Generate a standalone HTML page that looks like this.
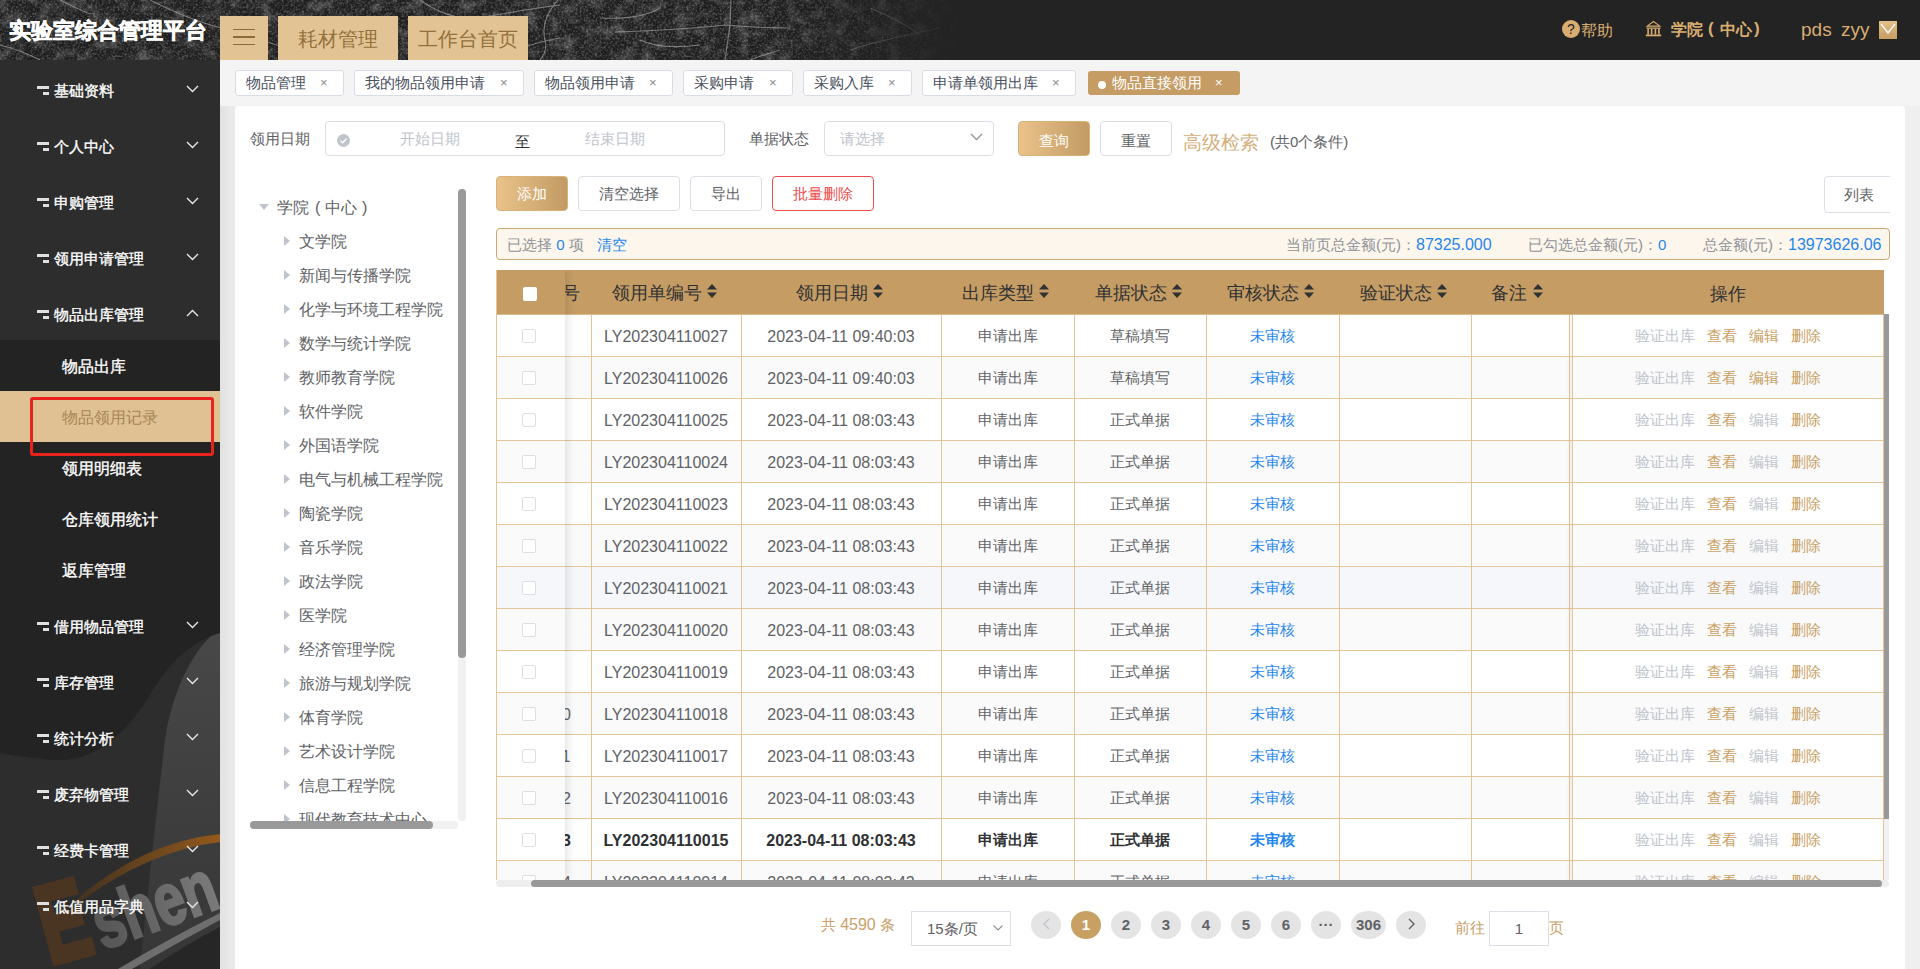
<!DOCTYPE html><html><head><meta charset="utf-8"><style>
*{margin:0;padding:0;box-sizing:border-box}
html,body{width:1920px;height:969px;overflow:hidden;background:#efefef;font-family:"Liberation Sans",sans-serif;color:#606266}
div,span{position:absolute;white-space:nowrap}
.htab{top:16px;height:44px;background:#e2c494;color:#94703c;font-size:20px;text-align:center;line-height:46px}
.mi{left:0;width:220px;height:56px;color:#fff;font-size:15px}
.mi .ic{left:37px;top:26px;width:12px;height:2.5px;background:#e0e0e0}
.mi .ic2{left:43px;top:32px;width:6px;height:2.5px;background:#e0e0e0}
.mi .t{left:54px;top:22px;line-height:18px;font-weight:500;-webkit-text-stroke:0.35px #fff}
.mi svg{position:absolute;left:186px;top:25px}
.si{left:0;width:220px;height:51px;color:#fff;font-size:16px}
.si .t{left:62px;top:18px;line-height:18px;font-weight:500;-webkit-text-stroke:0.35px #fff}
.tag{top:70px;height:26px;border:1px solid #d8dce5;border-radius:3px;background:#fff;font-size:15px;color:#495060}
.tag .t{left:10px;top:3px;line-height:18px}
.tag .x{top:4px;line-height:16px;font-size:13px;color:#888}
.lbl{font-size:15px;color:#606266;line-height:18px}
.inp{border:1px solid #dcdfe6;border-radius:4px;background:#fff}
.ph{font-size:15px;color:#c0c4cc;line-height:18px}
.btn{height:35px;border:1px solid #dcdfe6;border-radius:4px;background:#fff;font-size:15px;color:#606266;text-align:center;line-height:33px}
.gbtn{background:linear-gradient(90deg,#eac38b,#c19b63);border-color:#d8b27a;color:#fff}
.th{top:270px;height:44px;background:#c49c64}
.tht{font-size:17.5px;color:#303133;line-height:20px;top:283px}
.sort{top:284px;width:10px;height:14px}
.row{left:496px;width:1388px;height:42px;border-bottom:1px solid #e4c497}
.cell{font-size:15px;color:#606266;line-height:18px}
.en{font-size:16px}
.vl{width:1px;background:#e4c497}
.cb{width:14px;height:14px;border:1px solid #dcdfe6;border-radius:2px;background:#fff}
.pg{top:911px;width:30px;height:28px;border-radius:50%;background:#e4e4e4;font-size:15px;font-weight:bold;color:#606266;text-align:center;line-height:28px}
</style></head><body>
<div style="left:0;top:0;width:1920px;height:60px;background:#232323;overflow:hidden">
<svg style="position:absolute;left:0;top:0" width="980" height="60"><defs><filter id="nz" x="0" y="0" width="100%" height="100%"><feTurbulence type="fractalNoise" baseFrequency="0.45" numOctaves="4" seed="7"/><feColorMatrix values="0 0 0 0 1  0 0 0 0 1  0 0 0 0 1  0 2.2 0 0 -0.95"/></filter><filter id="nz2" x="0" y="0" width="100%" height="100%"><feTurbulence type="fractalNoise" baseFrequency="0.08" numOctaves="3" seed="11"/><feColorMatrix values="0 0 0 0 1  0 0 0 0 1  0 0 0 0 1  2.5 0 0 0 -1.1"/></filter><linearGradient id="fade" x1="0" x2="1"><stop offset="0" stop-color="#fff" stop-opacity="1"/><stop offset="0.78" stop-color="#fff" stop-opacity="1"/><stop offset="0.98" stop-color="#fff" stop-opacity="0"/></linearGradient><mask id="fm"><rect width="980" height="60" fill="url(#fade)"/></mask></defs><g mask="url(#fm)"><rect width="980" height="60" fill="#1e1e1e"/><rect width="980" height="60" filter="url(#nz2)" opacity="0.2"/><rect width="980" height="60" filter="url(#nz)" opacity="0.28"/><g fill="none" stroke="#b0b0b0" stroke-width="1.1" opacity="0.6"><path d="M232 30 Q290 50 330 62"/><path d="M558 0 Q540 20 545 40 Q548 50 540 60"/><path d="M731 0 L730 25 L725 60"/><path d="M615 32 Q680 30 725 25 Q760 28 790 28"/><path d="M640 40 Q660 50 700 45"/><path d="M780 50 Q760 56 750 60"/><path d="M420 0 Q440 15 470 20 Q520 10 560 5"/><path d="M150 0 Q200 25 232 30"/><path d="M600 18 Q640 20 660 8"/><path d="M870 8 Q900 20 920 35"/><path d="M850 50 Q880 40 940 28"/><path d="M450 20 Q430 40 415 60"/><path d="M500 60 Q520 45 560 38"/><path d="M60 0 Q80 10 90 14"/><path d="M0 45 Q20 50 40 60"/><path d="M950 10 L970 40"/></g></g></svg>
<div style="left:9px;top:18px;font-size:22px;font-weight:bold;-webkit-text-stroke:0.6px #fff;color:#fff;line-height:26px">实验室综合管理平台</div>
<div class="htab" style="left:220px;width:48px"></div>
<div style="left:233px;top:29px;width:22px;height:1.3px;background:#8d6a36"></div>
<div style="left:233px;top:36px;width:22px;height:2px;background:#8d6a36"></div>
<div style="left:233px;top:44px;width:22px;height:1.3px;background:#8d6a36"></div>
<div class="htab" style="left:278px;width:120px">耗材管理</div>
<div class="htab" style="left:408px;width:120px">工作台首页</div>
<div style="left:1562px;top:20px;width:18px;height:18px;border-radius:50%;background:#d9ad72;color:#232323;font-size:14px;font-weight:normal;text-align:center;line-height:18px">?</div>
<div style="left:1581px;top:21px;font-size:16px;color:#d9ad72;line-height:20px">帮助</div>
<svg style="position:absolute;left:1645px;top:20px" width="17" height="17" viewBox="0 0 17 17"><path d="M0.5 6.8 L8.5 0.8 L16.5 6.8 Z" fill="#d9ad72"/><path d="M3.8 5.6 L8.5 2.3 L13.2 5.6Z" fill="#232323"/><rect x="1.5" y="7.5" width="14" height="1.2" fill="#d9ad72"/><rect x="2.3" y="8.5" width="1.6" height="6" fill="#d9ad72"/><rect x="5.8" y="8.5" width="1.6" height="6" fill="#d9ad72"/><rect x="9.6" y="8.5" width="1.6" height="6" fill="#d9ad72"/><rect x="13.1" y="8.5" width="1.6" height="6" fill="#d9ad72"/><rect x="0.8" y="14.5" width="15.4" height="1.8" fill="#d9ad72"/></svg>
<div style="left:1671px;top:20px;font-size:16px;font-weight:bold;color:#d9ad72;line-height:20px">学院</div>
<div style="left:1708px;top:19px;font-size:17px;font-weight:bold;color:#d9ad72;line-height:20px">(</div>
<div style="left:1720px;top:20px;font-size:16px;font-weight:bold;color:#d9ad72;line-height:20px">中心</div>
<div style="left:1754px;top:19px;font-size:17px;font-weight:bold;color:#d9ad72;line-height:20px">)</div>
<div style="left:1801px;top:19px;font-size:19px;color:#d9ad72;line-height:22px">pds</div>
<div style="left:1841px;top:19px;font-size:19px;color:#d9ad72;line-height:22px">zyy</div>
<div style="left:1879px;top:21px;width:18px;height:18px;background:linear-gradient(180deg,#e4c08a,#c59c62)"></div>
<svg style="position:absolute;left:1879px;top:21px" width="18" height="18"><path d="M2 3 L9 12 L16 3" fill="none" stroke="#fff" stroke-width="1.3"/></svg>
</div>
<div style="left:0;top:60px;width:220px;height:909px;background:#2d2d2d;overflow:hidden">
<svg style="position:absolute;left:0;top:0" width="220" height="909"><defs><linearGradient id="lg1" x1="0" y1="0" x2="0" y2="1"><stop offset="0" stop-color="#484848"/><stop offset="1" stop-color="#363636"/></linearGradient><linearGradient id="og" x1="0" y1="0" x2="1" y2="0"><stop offset="0" stop-color="#3e3020"/><stop offset="1" stop-color="#93591c"/></linearGradient><linearGradient id="sg" x1="0" y1="0" x2="1" y2="0"><stop offset="0" stop-color="#555"/><stop offset="1" stop-color="#7a7a7a"/></linearGradient></defs><g transform="translate(0,-60)"><path d="M220 629 C195 645 172 690 165 740 C158 800 150 870 140 969 L220 969 Z" fill="url(#lg1)"/><path d="M0 596 L220 596 L220 633 C195 640 170 660 150 695 C125 735 95 762 55 760 C30 758 10 755 0 753 Z" fill="#232323"/><path d="M70 905 Q140 842 220 834 L220 842 Q150 850 78 903 Z" fill="url(#og)"/><text transform="translate(50,964) rotate(-15) scale(0.72,1.1)" font-size="100" font-weight="bold" fill="#4a3522" stroke="#4a3522" stroke-width="6" font-family="Liberation Sans">E</text><text transform="translate(103,950) rotate(-20) scale(0.8,1.08)" font-size="68" font-weight="bold" fill="url(#sg)" stroke="url(#sg)" stroke-width="2.5" font-family="Liberation Sans">shen</text><path d="M150 969 Q185 945 220 927 L220 969 Z" fill="#262626"/><path d="M118 969 Q170 938 220 913 L220 920 Q175 944 132 969 Z" fill="#6e6e6e"/></g></svg>
</div>
<div style="left:0;top:340px;width:220px;height:256px;background:#232323"></div>
<div class="mi" style="top:60px"><div class="ic"></div><div class="ic2"></div><div class="t">基础资料</div><svg width="13" height="8" viewBox="0 0 13 8"><path d="M1 1 L6.5 6.5 L12 1" fill="none" stroke="#e8e8e8" stroke-width="1.4"/></svg></div>
<div class="mi" style="top:116px"><div class="ic"></div><div class="ic2"></div><div class="t">个人中心</div><svg width="13" height="8" viewBox="0 0 13 8"><path d="M1 1 L6.5 6.5 L12 1" fill="none" stroke="#e8e8e8" stroke-width="1.4"/></svg></div>
<div class="mi" style="top:172px"><div class="ic"></div><div class="ic2"></div><div class="t">申购管理</div><svg width="13" height="8" viewBox="0 0 13 8"><path d="M1 1 L6.5 6.5 L12 1" fill="none" stroke="#e8e8e8" stroke-width="1.4"/></svg></div>
<div class="mi" style="top:228px"><div class="ic"></div><div class="ic2"></div><div class="t">领用申请管理</div><svg width="13" height="8" viewBox="0 0 13 8"><path d="M1 1 L6.5 6.5 L12 1" fill="none" stroke="#e8e8e8" stroke-width="1.4"/></svg></div>
<div class="mi" style="top:284px"><div class="ic"></div><div class="ic2"></div><div class="t">物品出库管理</div><svg width="13" height="8" viewBox="0 0 13 8"><path d="M1 7 L6.5 1.5 L12 7" fill="none" stroke="#e8e8e8" stroke-width="1.4"/></svg></div>
<div class="mi" style="top:596px"><div class="ic"></div><div class="ic2"></div><div class="t">借用物品管理</div><svg width="13" height="8" viewBox="0 0 13 8"><path d="M1 1 L6.5 6.5 L12 1" fill="none" stroke="#e8e8e8" stroke-width="1.4"/></svg></div>
<div class="mi" style="top:652px"><div class="ic"></div><div class="ic2"></div><div class="t">库存管理</div><svg width="13" height="8" viewBox="0 0 13 8"><path d="M1 1 L6.5 6.5 L12 1" fill="none" stroke="#e8e8e8" stroke-width="1.4"/></svg></div>
<div class="mi" style="top:708px"><div class="ic"></div><div class="ic2"></div><div class="t">统计分析</div><svg width="13" height="8" viewBox="0 0 13 8"><path d="M1 1 L6.5 6.5 L12 1" fill="none" stroke="#e8e8e8" stroke-width="1.4"/></svg></div>
<div class="mi" style="top:764px"><div class="ic"></div><div class="ic2"></div><div class="t">废弃物管理</div><svg width="13" height="8" viewBox="0 0 13 8"><path d="M1 1 L6.5 6.5 L12 1" fill="none" stroke="#e8e8e8" stroke-width="1.4"/></svg></div>
<div class="mi" style="top:820px"><div class="ic"></div><div class="ic2"></div><div class="t">经费卡管理</div><svg width="13" height="8" viewBox="0 0 13 8"><path d="M1 1 L6.5 6.5 L12 1" fill="none" stroke="#e8e8e8" stroke-width="1.4"/></svg></div>
<div class="mi" style="top:876px"><div class="ic"></div><div class="ic2"></div><div class="t">低值用品字典</div><svg width="13" height="8" viewBox="0 0 13 8"><path d="M1 1 L6.5 6.5 L12 1" fill="none" stroke="#e8e8e8" stroke-width="1.4"/></svg></div>
<div style="left:0;top:391px;width:220px;height:51px;background:#e0c193"></div>
<div class="si" style="top:340px"><div class="t" style="">物品出库</div></div>
<div class="si" style="top:391px"><div class="t" style="color:#a88658;font-weight:normal;-webkit-text-stroke:0">物品领用记录</div></div>
<div class="si" style="top:442px"><div class="t" style="">领用明细表</div></div>
<div class="si" style="top:493px"><div class="t" style="">仓库领用统计</div></div>
<div class="si" style="top:544px"><div class="t" style="">返库管理</div></div>
<div style="left:30px;top:397px;width:184px;height:59px;border:3px solid #e8231d;border-radius:3px"></div>
<div style="left:220px;top:60px;width:1700px;height:46px;background:#f4f4f5"></div>
<div style="left:220px;top:106px;width:15px;height:863px;background:linear-gradient(90deg,#e2e2e2,#ececec)"></div>
<div class="tag" style="left:235px;width:109px"><span class="t">物品管理</span><span class="x" style="left:84px">×</span></div>
<div class="tag" style="left:354px;width:170px"><span class="t">我的物品领用申请</span><span class="x" style="left:145px">×</span></div>
<div class="tag" style="left:534px;width:139px"><span class="t">物品领用申请</span><span class="x" style="left:114px">×</span></div>
<div class="tag" style="left:683px;width:110px"><span class="t">采购申请</span><span class="x" style="left:85px">×</span></div>
<div class="tag" style="left:803px;width:109px"><span class="t">采购入库</span><span class="x" style="left:84px">×</span></div>
<div class="tag" style="left:922px;width:154px"><span class="t">申请单领用出库</span><span class="x" style="left:129px">×</span></div>
<div style="left:1088px;top:71px;width:152px;height:24px;background:#c49c64;border-radius:3px"></div>
<div style="left:1098px;top:81px;width:8px;height:8px;border-radius:50%;background:#fff"></div>
<div style="left:1112px;top:74px;font-size:15px;color:#fff;line-height:18px">物品直接领用</div>
<div style="left:1215px;top:75px;font-size:13px;color:#fff;line-height:16px">×</div>
<div style="left:235px;top:106px;width:1670px;height:863px;background:#fff;border-radius:4px 4px 0 0"></div>
<div class="lbl" style="left:250px;top:130px">领用日期</div>
<div class="inp" style="left:325px;top:121px;width:400px;height:35px"></div>
<div style="left:337px;top:134px;width:13px;height:13px;border-radius:50%;background:#c0c4cc"></div>
<svg style="position:absolute;left:337px;top:134px" width="13" height="13"><path d="M3.5 6.8 L5.6 8.8 L9.6 4.6" fill="none" stroke="#fff" stroke-width="1.3"/></svg>
<div class="ph" style="left:400px;top:130px">开始日期</div>
<div style="left:515px;top:133px;font-size:15px;color:#303133;line-height:18px">至</div>
<div class="ph" style="left:585px;top:130px">结束日期</div>
<div class="lbl" style="left:749px;top:130px">单据状态</div>
<div class="inp" style="left:824px;top:121px;width:170px;height:35px"></div>
<div class="ph" style="left:840px;top:130px">请选择</div>
<svg style="position:absolute;left:970px;top:133px" width="13" height="8"><path d="M1 1 L6.5 6.5 L12 1" fill="none" stroke="#909399" stroke-width="1.3"/></svg>
<div class="btn gbtn" style="left:1018px;top:121px;width:72px;line-height:37px">查询</div>
<div class="btn" style="left:1100px;top:121px;width:72px;line-height:37px">重置</div>
<div style="left:1183px;top:132px;font-size:19px;color:#d4b080;line-height:22px">高级检索</div>
<div style="left:1270px;top:133px;font-size:15px;color:#606266;line-height:18px">(共0个条件)</div>
<div style="left:240px;top:180px;width:220px;height:641px;overflow:hidden">
<svg style="position:absolute;left:19px;top:24px" width="10" height="6"><path d="M0 0 L10 0 L5 6Z" fill="#c0c4cc"/></svg>
<div style="left:37px;top:19px;font-size:16px;color:#606266;line-height:18px">学院</div>
<div style="left:75px;top:19px;font-size:16px;color:#606266;line-height:18px">(</div>
<div style="left:85px;top:19px;font-size:16px;color:#606266;line-height:18px">中心</div>
<div style="left:122px;top:19px;font-size:16px;color:#606266;line-height:18px">)</div>
<svg style="position:absolute;left:44px;top:56px" width="6" height="10"><path d="M0 0 L6 5 L0 10Z" fill="#c0c4cc"/></svg>
<div style="left:59px;top:53px;font-size:16px;color:#606266;line-height:18px">文学院</div>
<svg style="position:absolute;left:44px;top:90px" width="6" height="10"><path d="M0 0 L6 5 L0 10Z" fill="#c0c4cc"/></svg>
<div style="left:59px;top:87px;font-size:16px;color:#606266;line-height:18px">新闻与传播学院</div>
<svg style="position:absolute;left:44px;top:124px" width="6" height="10"><path d="M0 0 L6 5 L0 10Z" fill="#c0c4cc"/></svg>
<div style="left:59px;top:121px;font-size:16px;color:#606266;line-height:18px">化学与环境工程学院</div>
<svg style="position:absolute;left:44px;top:158px" width="6" height="10"><path d="M0 0 L6 5 L0 10Z" fill="#c0c4cc"/></svg>
<div style="left:59px;top:155px;font-size:16px;color:#606266;line-height:18px">数学与统计学院</div>
<svg style="position:absolute;left:44px;top:192px" width="6" height="10"><path d="M0 0 L6 5 L0 10Z" fill="#c0c4cc"/></svg>
<div style="left:59px;top:189px;font-size:16px;color:#606266;line-height:18px">教师教育学院</div>
<svg style="position:absolute;left:44px;top:226px" width="6" height="10"><path d="M0 0 L6 5 L0 10Z" fill="#c0c4cc"/></svg>
<div style="left:59px;top:223px;font-size:16px;color:#606266;line-height:18px">软件学院</div>
<svg style="position:absolute;left:44px;top:260px" width="6" height="10"><path d="M0 0 L6 5 L0 10Z" fill="#c0c4cc"/></svg>
<div style="left:59px;top:257px;font-size:16px;color:#606266;line-height:18px">外国语学院</div>
<svg style="position:absolute;left:44px;top:294px" width="6" height="10"><path d="M0 0 L6 5 L0 10Z" fill="#c0c4cc"/></svg>
<div style="left:59px;top:291px;font-size:16px;color:#606266;line-height:18px">电气与机械工程学院</div>
<svg style="position:absolute;left:44px;top:328px" width="6" height="10"><path d="M0 0 L6 5 L0 10Z" fill="#c0c4cc"/></svg>
<div style="left:59px;top:325px;font-size:16px;color:#606266;line-height:18px">陶瓷学院</div>
<svg style="position:absolute;left:44px;top:362px" width="6" height="10"><path d="M0 0 L6 5 L0 10Z" fill="#c0c4cc"/></svg>
<div style="left:59px;top:359px;font-size:16px;color:#606266;line-height:18px">音乐学院</div>
<svg style="position:absolute;left:44px;top:396px" width="6" height="10"><path d="M0 0 L6 5 L0 10Z" fill="#c0c4cc"/></svg>
<div style="left:59px;top:393px;font-size:16px;color:#606266;line-height:18px">政法学院</div>
<svg style="position:absolute;left:44px;top:430px" width="6" height="10"><path d="M0 0 L6 5 L0 10Z" fill="#c0c4cc"/></svg>
<div style="left:59px;top:427px;font-size:16px;color:#606266;line-height:18px">医学院</div>
<svg style="position:absolute;left:44px;top:464px" width="6" height="10"><path d="M0 0 L6 5 L0 10Z" fill="#c0c4cc"/></svg>
<div style="left:59px;top:461px;font-size:16px;color:#606266;line-height:18px">经济管理学院</div>
<svg style="position:absolute;left:44px;top:498px" width="6" height="10"><path d="M0 0 L6 5 L0 10Z" fill="#c0c4cc"/></svg>
<div style="left:59px;top:495px;font-size:16px;color:#606266;line-height:18px">旅游与规划学院</div>
<svg style="position:absolute;left:44px;top:532px" width="6" height="10"><path d="M0 0 L6 5 L0 10Z" fill="#c0c4cc"/></svg>
<div style="left:59px;top:529px;font-size:16px;color:#606266;line-height:18px">体育学院</div>
<svg style="position:absolute;left:44px;top:566px" width="6" height="10"><path d="M0 0 L6 5 L0 10Z" fill="#c0c4cc"/></svg>
<div style="left:59px;top:563px;font-size:16px;color:#606266;line-height:18px">艺术设计学院</div>
<svg style="position:absolute;left:44px;top:600px" width="6" height="10"><path d="M0 0 L6 5 L0 10Z" fill="#c0c4cc"/></svg>
<div style="left:59px;top:597px;font-size:16px;color:#606266;line-height:18px">信息工程学院</div>
<svg style="position:absolute;left:44px;top:634px" width="6" height="10"><path d="M0 0 L6 5 L0 10Z" fill="#c0c4cc"/></svg>
<div style="left:59px;top:631px;font-size:16px;color:#606266;line-height:18px">现代教育技术中心</div>
</div>
<div style="left:458px;top:189px;width:8px;height:632px;border-radius:4px;background:#f1f1f1"></div>
<div style="left:458px;top:189px;width:8px;height:469px;border-radius:4px;background:#999"></div>
<div style="left:250px;top:821px;width:208px;height:8px;border-radius:4px;background:#f1f1f1"></div>
<div style="left:250px;top:821px;width:183px;height:8px;border-radius:4px;background:#999"></div>
<div class="btn gbtn" style="left:496px;top:176px;width:72px">添加</div>
<div class="btn" style="left:578px;top:176px;width:102px">清空选择</div>
<div class="btn" style="left:690px;top:176px;width:72px">导出</div>
<div class="btn" style="left:772px;top:176px;width:102px;border-color:#f04a4a;color:#f04a4a">批量删除</div>
<div class="btn" style="left:1824px;top:176px;width:70px;height:37px;line-height:36px">列表</div>
<div style="left:1890px;top:170px;width:15px;height:50px;background:#fff"></div>
<div style="left:496px;top:228px;width:1394px;height:32px;border:1px solid #c9a878;border-radius:4px;background:#fdf6ec"></div>
<div style="left:507px;top:236px;font-size:15px;line-height:18px;color:#909399">已选择 <span style="position:static;color:#1f86f0">0</span> 项</div>
<div style="left:597px;top:236px;font-size:15px;line-height:18px;color:#1f86f0">清空</div>
<div style="left:1286px;top:236px;font-size:15px;line-height:18px;color:#909399">当前页总金额(元)：<span style="position:static;color:#1f86f0;font-size:16px">87325.000</span></div>
<div style="left:1528px;top:236px;font-size:15px;line-height:18px;color:#909399">已勾选总金额(元)：<span style="position:static;color:#1f86f0">0</span></div>
<div style="left:1703px;top:236px;font-size:15px;line-height:18px;color:#909399">总金额(元)：<span style="position:static;color:#1f86f0;font-size:16px">13973626.06</span></div>
<div style="left:496px;top:270px;width:1393px;height:610px;overflow:hidden">
<div style="left:0;top:0;width:1388px;height:45px;background:#c49c64;border-bottom:1px solid #dcbb8a"></div>
<div class="tht" style="left:116px;top:13px">领用单编号</div>
<svg style="position:absolute;left:211px;top:14px" width="10" height="14" viewBox="0 0 10 14"><path d="M5 0 L10 5.5 L0 5.5Z" fill="#303133"/><path d="M0 8.5 L10 8.5 L5 14Z" fill="#303133"/></svg>
<div class="tht" style="left:300px;top:13px">领用日期</div>
<svg style="position:absolute;left:377px;top:14px" width="10" height="14" viewBox="0 0 10 14"><path d="M5 0 L10 5.5 L0 5.5Z" fill="#303133"/><path d="M0 8.5 L10 8.5 L5 14Z" fill="#303133"/></svg>
<div class="tht" style="left:466px;top:13px">出库类型</div>
<svg style="position:absolute;left:543px;top:14px" width="10" height="14" viewBox="0 0 10 14"><path d="M5 0 L10 5.5 L0 5.5Z" fill="#303133"/><path d="M0 8.5 L10 8.5 L5 14Z" fill="#303133"/></svg>
<div class="tht" style="left:599px;top:13px">单据状态</div>
<svg style="position:absolute;left:676px;top:14px" width="10" height="14" viewBox="0 0 10 14"><path d="M5 0 L10 5.5 L0 5.5Z" fill="#303133"/><path d="M0 8.5 L10 8.5 L5 14Z" fill="#303133"/></svg>
<div class="tht" style="left:731px;top:13px">审核状态</div>
<svg style="position:absolute;left:808px;top:14px" width="10" height="14" viewBox="0 0 10 14"><path d="M5 0 L10 5.5 L0 5.5Z" fill="#303133"/><path d="M0 8.5 L10 8.5 L5 14Z" fill="#303133"/></svg>
<div class="tht" style="left:864px;top:13px">验证状态</div>
<svg style="position:absolute;left:941px;top:14px" width="10" height="14" viewBox="0 0 10 14"><path d="M5 0 L10 5.5 L0 5.5Z" fill="#303133"/><path d="M0 8.5 L10 8.5 L5 14Z" fill="#303133"/></svg>
<div class="tht" style="left:995px;top:13px">备注</div>
<svg style="position:absolute;left:1037px;top:14px" width="10" height="14" viewBox="0 0 10 14"><path d="M5 0 L10 5.5 L0 5.5Z" fill="#303133"/><path d="M0 8.5 L10 8.5 L5 14Z" fill="#303133"/></svg>
<div class="tht" style="left:66px;top:13px">号</div>
<div style="left:0;top:45px;width:1388px;height:42px;background:#fff;border-bottom:1px solid #e5c699"></div>
<div class="cell en" style="left:95px;top:58px;width:150px;text-align:center;">LY202304110027</div>
<div class="cell en" style="left:245px;top:58px;width:200px;text-align:center;">2023-04-11 09:40:03</div>
<div class="cell" style="left:445px;top:57px;width:133px;text-align:center;">申请出库</div>
<div class="cell" style="left:578px;top:57px;width:132px;text-align:center;">草稿填写</div>
<div class="cell" style="left:710px;top:57px;width:133px;text-align:center;color:#1f86f0;">未审核</div>
<div style="left:0;top:87px;width:1388px;height:42px;background:#fafafa;border-bottom:1px solid #e5c699"></div>
<div class="cell en" style="left:95px;top:100px;width:150px;text-align:center;">LY202304110026</div>
<div class="cell en" style="left:245px;top:100px;width:200px;text-align:center;">2023-04-11 09:40:03</div>
<div class="cell" style="left:445px;top:99px;width:133px;text-align:center;">申请出库</div>
<div class="cell" style="left:578px;top:99px;width:132px;text-align:center;">草稿填写</div>
<div class="cell" style="left:710px;top:99px;width:133px;text-align:center;color:#1f86f0;">未审核</div>
<div style="left:0;top:129px;width:1388px;height:42px;background:#fff;border-bottom:1px solid #e5c699"></div>
<div class="cell en" style="left:95px;top:142px;width:150px;text-align:center;">LY202304110025</div>
<div class="cell en" style="left:245px;top:142px;width:200px;text-align:center;">2023-04-11 08:03:43</div>
<div class="cell" style="left:445px;top:141px;width:133px;text-align:center;">申请出库</div>
<div class="cell" style="left:578px;top:141px;width:132px;text-align:center;">正式单据</div>
<div class="cell" style="left:710px;top:141px;width:133px;text-align:center;color:#1f86f0;">未审核</div>
<div style="left:0;top:171px;width:1388px;height:42px;background:#fafafa;border-bottom:1px solid #e5c699"></div>
<div class="cell en" style="left:95px;top:184px;width:150px;text-align:center;">LY202304110024</div>
<div class="cell en" style="left:245px;top:184px;width:200px;text-align:center;">2023-04-11 08:03:43</div>
<div class="cell" style="left:445px;top:183px;width:133px;text-align:center;">申请出库</div>
<div class="cell" style="left:578px;top:183px;width:132px;text-align:center;">正式单据</div>
<div class="cell" style="left:710px;top:183px;width:133px;text-align:center;color:#1f86f0;">未审核</div>
<div style="left:0;top:213px;width:1388px;height:42px;background:#fff;border-bottom:1px solid #e5c699"></div>
<div class="cell en" style="left:95px;top:226px;width:150px;text-align:center;">LY202304110023</div>
<div class="cell en" style="left:245px;top:226px;width:200px;text-align:center;">2023-04-11 08:03:43</div>
<div class="cell" style="left:445px;top:225px;width:133px;text-align:center;">申请出库</div>
<div class="cell" style="left:578px;top:225px;width:132px;text-align:center;">正式单据</div>
<div class="cell" style="left:710px;top:225px;width:133px;text-align:center;color:#1f86f0;">未审核</div>
<div style="left:0;top:255px;width:1388px;height:42px;background:#fafafa;border-bottom:1px solid #e5c699"></div>
<div class="cell en" style="left:95px;top:268px;width:150px;text-align:center;">LY202304110022</div>
<div class="cell en" style="left:245px;top:268px;width:200px;text-align:center;">2023-04-11 08:03:43</div>
<div class="cell" style="left:445px;top:267px;width:133px;text-align:center;">申请出库</div>
<div class="cell" style="left:578px;top:267px;width:132px;text-align:center;">正式单据</div>
<div class="cell" style="left:710px;top:267px;width:133px;text-align:center;color:#1f86f0;">未审核</div>
<div style="left:0;top:297px;width:1388px;height:42px;background:#f5f7fa;border-bottom:1px solid #e5c699"></div>
<div class="cell en" style="left:95px;top:310px;width:150px;text-align:center;">LY202304110021</div>
<div class="cell en" style="left:245px;top:310px;width:200px;text-align:center;">2023-04-11 08:03:43</div>
<div class="cell" style="left:445px;top:309px;width:133px;text-align:center;">申请出库</div>
<div class="cell" style="left:578px;top:309px;width:132px;text-align:center;">正式单据</div>
<div class="cell" style="left:710px;top:309px;width:133px;text-align:center;color:#1f86f0;">未审核</div>
<div style="left:0;top:339px;width:1388px;height:42px;background:#fafafa;border-bottom:1px solid #e5c699"></div>
<div class="cell en" style="left:95px;top:352px;width:150px;text-align:center;">LY202304110020</div>
<div class="cell en" style="left:245px;top:352px;width:200px;text-align:center;">2023-04-11 08:03:43</div>
<div class="cell" style="left:445px;top:351px;width:133px;text-align:center;">申请出库</div>
<div class="cell" style="left:578px;top:351px;width:132px;text-align:center;">正式单据</div>
<div class="cell" style="left:710px;top:351px;width:133px;text-align:center;color:#1f86f0;">未审核</div>
<div style="left:0;top:381px;width:1388px;height:42px;background:#fff;border-bottom:1px solid #e5c699"></div>
<div class="cell en" style="left:95px;top:394px;width:150px;text-align:center;">LY202304110019</div>
<div class="cell en" style="left:245px;top:394px;width:200px;text-align:center;">2023-04-11 08:03:43</div>
<div class="cell" style="left:445px;top:393px;width:133px;text-align:center;">申请出库</div>
<div class="cell" style="left:578px;top:393px;width:132px;text-align:center;">正式单据</div>
<div class="cell" style="left:710px;top:393px;width:133px;text-align:center;color:#1f86f0;">未审核</div>
<div style="left:0;top:423px;width:1388px;height:42px;background:#fafafa;border-bottom:1px solid #e5c699"></div>
<div class="cell en" style="left:46px;top:436px;width:40px;text-align:center;">10</div>
<div class="cell en" style="left:95px;top:436px;width:150px;text-align:center;">LY202304110018</div>
<div class="cell en" style="left:245px;top:436px;width:200px;text-align:center;">2023-04-11 08:03:43</div>
<div class="cell" style="left:445px;top:435px;width:133px;text-align:center;">申请出库</div>
<div class="cell" style="left:578px;top:435px;width:132px;text-align:center;">正式单据</div>
<div class="cell" style="left:710px;top:435px;width:133px;text-align:center;color:#1f86f0;">未审核</div>
<div style="left:0;top:465px;width:1388px;height:42px;background:#fff;border-bottom:1px solid #e5c699"></div>
<div class="cell en" style="left:46px;top:478px;width:40px;text-align:center;">11</div>
<div class="cell en" style="left:95px;top:478px;width:150px;text-align:center;">LY202304110017</div>
<div class="cell en" style="left:245px;top:478px;width:200px;text-align:center;">2023-04-11 08:03:43</div>
<div class="cell" style="left:445px;top:477px;width:133px;text-align:center;">申请出库</div>
<div class="cell" style="left:578px;top:477px;width:132px;text-align:center;">正式单据</div>
<div class="cell" style="left:710px;top:477px;width:133px;text-align:center;color:#1f86f0;">未审核</div>
<div style="left:0;top:507px;width:1388px;height:42px;background:#fafafa;border-bottom:1px solid #e5c699"></div>
<div class="cell en" style="left:46px;top:520px;width:40px;text-align:center;">12</div>
<div class="cell en" style="left:95px;top:520px;width:150px;text-align:center;">LY202304110016</div>
<div class="cell en" style="left:245px;top:520px;width:200px;text-align:center;">2023-04-11 08:03:43</div>
<div class="cell" style="left:445px;top:519px;width:133px;text-align:center;">申请出库</div>
<div class="cell" style="left:578px;top:519px;width:132px;text-align:center;">正式单据</div>
<div class="cell" style="left:710px;top:519px;width:133px;text-align:center;color:#1f86f0;">未审核</div>
<div style="left:0;top:549px;width:1388px;height:42px;background:#fff;border-bottom:1px solid #e5c699"></div>
<div class="cell en" style="left:46px;top:562px;width:40px;text-align:center;font-weight:bold;color:#303133;">13</div>
<div class="cell en" style="left:95px;top:562px;width:150px;text-align:center;font-weight:bold;color:#303133;">LY202304110015</div>
<div class="cell en" style="left:245px;top:562px;width:200px;text-align:center;font-weight:bold;color:#303133;">2023-04-11 08:03:43</div>
<div class="cell" style="left:445px;top:561px;width:133px;text-align:center;font-weight:bold;color:#303133;">申请出库</div>
<div class="cell" style="left:578px;top:561px;width:132px;text-align:center;font-weight:bold;color:#303133;">正式单据</div>
<div class="cell" style="left:710px;top:561px;width:133px;text-align:center;font-weight:bold;color:#303133;color:#1f86f0;">未审核</div>
<div style="left:0;top:591px;width:1388px;height:42px;background:#fafafa;border-bottom:1px solid #e5c699"></div>
<div class="cell en" style="left:46px;top:604px;width:40px;text-align:center;">14</div>
<div class="cell en" style="left:95px;top:604px;width:150px;text-align:center;">LY202304110014</div>
<div class="cell en" style="left:245px;top:604px;width:200px;text-align:center;">2023-04-11 08:03:43</div>
<div class="cell" style="left:445px;top:603px;width:133px;text-align:center;">申请出库</div>
<div class="cell" style="left:578px;top:603px;width:132px;text-align:center;">正式单据</div>
<div class="cell" style="left:710px;top:603px;width:133px;text-align:center;color:#1f86f0;">未审核</div>
<div class="vl" style="left:95px;top:45px;height:565px"></div>
<div class="vl" style="left:245px;top:45px;height:565px"></div>
<div class="vl" style="left:445px;top:45px;height:565px"></div>
<div class="vl" style="left:578px;top:45px;height:565px"></div>
<div class="vl" style="left:710px;top:45px;height:565px"></div>
<div class="vl" style="left:843px;top:45px;height:565px"></div>
<div class="vl" style="left:975px;top:45px;height:565px"></div>
<div class="vl" style="left:1073px;top:45px;height:565px"></div>
<div style="left:0;top:0;width:69px;height:610px;box-shadow:3px 0 8px rgba(0,0,0,0.10)"></div>
<div style="left:0;top:0;width:69px;height:45px;background:#c49c64;border-bottom:1px solid #dcbb8a"></div>
<div style="left:27px;top:17px;width:14px;height:14px;background:#fff;border-radius:2px"></div>
<div style="left:0;top:45px;width:69px;height:42px;background:#fff;border-bottom:1px solid #e5c699"></div>
<div class="cb" style="left:26px;top:59px"></div>
<div style="left:0;top:87px;width:69px;height:42px;background:#fafafa;border-bottom:1px solid #e5c699"></div>
<div class="cb" style="left:26px;top:101px"></div>
<div style="left:0;top:129px;width:69px;height:42px;background:#fff;border-bottom:1px solid #e5c699"></div>
<div class="cb" style="left:26px;top:143px"></div>
<div style="left:0;top:171px;width:69px;height:42px;background:#fafafa;border-bottom:1px solid #e5c699"></div>
<div class="cb" style="left:26px;top:185px"></div>
<div style="left:0;top:213px;width:69px;height:42px;background:#fff;border-bottom:1px solid #e5c699"></div>
<div class="cb" style="left:26px;top:227px"></div>
<div style="left:0;top:255px;width:69px;height:42px;background:#fafafa;border-bottom:1px solid #e5c699"></div>
<div class="cb" style="left:26px;top:269px"></div>
<div style="left:0;top:297px;width:69px;height:42px;background:#f5f7fa;border-bottom:1px solid #e5c699"></div>
<div class="cb" style="left:26px;top:311px"></div>
<div style="left:0;top:339px;width:69px;height:42px;background:#fafafa;border-bottom:1px solid #e5c699"></div>
<div class="cb" style="left:26px;top:353px"></div>
<div style="left:0;top:381px;width:69px;height:42px;background:#fff;border-bottom:1px solid #e5c699"></div>
<div class="cb" style="left:26px;top:395px"></div>
<div style="left:0;top:423px;width:69px;height:42px;background:#fafafa;border-bottom:1px solid #e5c699"></div>
<div class="cb" style="left:26px;top:437px"></div>
<div style="left:0;top:465px;width:69px;height:42px;background:#fff;border-bottom:1px solid #e5c699"></div>
<div class="cb" style="left:26px;top:479px"></div>
<div style="left:0;top:507px;width:69px;height:42px;background:#fafafa;border-bottom:1px solid #e5c699"></div>
<div class="cb" style="left:26px;top:521px"></div>
<div style="left:0;top:549px;width:69px;height:42px;background:#fff;border-bottom:1px solid #e5c699"></div>
<div class="cb" style="left:26px;top:563px"></div>
<div style="left:0;top:591px;width:69px;height:42px;background:#fafafa;border-bottom:1px solid #e5c699"></div>
<div class="cb" style="left:26px;top:605px"></div>
<div class="vl" style="left:0;top:0;height:610px"></div>
<div style="left:1076px;top:44px;width:312px;height:566px;box-shadow:-2px 0 6px rgba(0,0,0,0.05)"></div>
<div style="left:1076px;top:0;width:312px;height:45px;background:#c49c64;border-bottom:1px solid #dcbb8a"></div>
<div class="tht" style="left:1214px;top:14px">操作</div>
<div style="left:1076px;top:45px;width:312px;height:42px;background:#fff;border-bottom:1px solid #e5c699"></div>
<div class="cell" style="left:1139px;top:57px;color:#c0c4cc">验证出库</div>
<div class="cell" style="left:1211px;top:57px;color:#c9a063">查看</div>
<div class="cell" style="left:1253px;top:57px;color:#c9a063">编辑</div>
<div class="cell" style="left:1295px;top:57px;color:#c9a063">删除</div>
<div style="left:1076px;top:87px;width:312px;height:42px;background:#fafafa;border-bottom:1px solid #e5c699"></div>
<div class="cell" style="left:1139px;top:99px;color:#c0c4cc">验证出库</div>
<div class="cell" style="left:1211px;top:99px;color:#c9a063">查看</div>
<div class="cell" style="left:1253px;top:99px;color:#c9a063">编辑</div>
<div class="cell" style="left:1295px;top:99px;color:#c9a063">删除</div>
<div style="left:1076px;top:129px;width:312px;height:42px;background:#fff;border-bottom:1px solid #e5c699"></div>
<div class="cell" style="left:1139px;top:141px;color:#c0c4cc">验证出库</div>
<div class="cell" style="left:1211px;top:141px;color:#c9a063">查看</div>
<div class="cell" style="left:1253px;top:141px;color:#c0c4cc">编辑</div>
<div class="cell" style="left:1295px;top:141px;color:#c9a063">删除</div>
<div style="left:1076px;top:171px;width:312px;height:42px;background:#fafafa;border-bottom:1px solid #e5c699"></div>
<div class="cell" style="left:1139px;top:183px;color:#c0c4cc">验证出库</div>
<div class="cell" style="left:1211px;top:183px;color:#c9a063">查看</div>
<div class="cell" style="left:1253px;top:183px;color:#c0c4cc">编辑</div>
<div class="cell" style="left:1295px;top:183px;color:#c9a063">删除</div>
<div style="left:1076px;top:213px;width:312px;height:42px;background:#fff;border-bottom:1px solid #e5c699"></div>
<div class="cell" style="left:1139px;top:225px;color:#c0c4cc">验证出库</div>
<div class="cell" style="left:1211px;top:225px;color:#c9a063">查看</div>
<div class="cell" style="left:1253px;top:225px;color:#c0c4cc">编辑</div>
<div class="cell" style="left:1295px;top:225px;color:#c9a063">删除</div>
<div style="left:1076px;top:255px;width:312px;height:42px;background:#fafafa;border-bottom:1px solid #e5c699"></div>
<div class="cell" style="left:1139px;top:267px;color:#c0c4cc">验证出库</div>
<div class="cell" style="left:1211px;top:267px;color:#c9a063">查看</div>
<div class="cell" style="left:1253px;top:267px;color:#c0c4cc">编辑</div>
<div class="cell" style="left:1295px;top:267px;color:#c9a063">删除</div>
<div style="left:1076px;top:297px;width:312px;height:42px;background:#f5f7fa;border-bottom:1px solid #e5c699"></div>
<div class="cell" style="left:1139px;top:309px;color:#c0c4cc">验证出库</div>
<div class="cell" style="left:1211px;top:309px;color:#c9a063">查看</div>
<div class="cell" style="left:1253px;top:309px;color:#c0c4cc">编辑</div>
<div class="cell" style="left:1295px;top:309px;color:#c9a063">删除</div>
<div style="left:1076px;top:339px;width:312px;height:42px;background:#fafafa;border-bottom:1px solid #e5c699"></div>
<div class="cell" style="left:1139px;top:351px;color:#c0c4cc">验证出库</div>
<div class="cell" style="left:1211px;top:351px;color:#c9a063">查看</div>
<div class="cell" style="left:1253px;top:351px;color:#c0c4cc">编辑</div>
<div class="cell" style="left:1295px;top:351px;color:#c9a063">删除</div>
<div style="left:1076px;top:381px;width:312px;height:42px;background:#fff;border-bottom:1px solid #e5c699"></div>
<div class="cell" style="left:1139px;top:393px;color:#c0c4cc">验证出库</div>
<div class="cell" style="left:1211px;top:393px;color:#c9a063">查看</div>
<div class="cell" style="left:1253px;top:393px;color:#c0c4cc">编辑</div>
<div class="cell" style="left:1295px;top:393px;color:#c9a063">删除</div>
<div style="left:1076px;top:423px;width:312px;height:42px;background:#fafafa;border-bottom:1px solid #e5c699"></div>
<div class="cell" style="left:1139px;top:435px;color:#c0c4cc">验证出库</div>
<div class="cell" style="left:1211px;top:435px;color:#c9a063">查看</div>
<div class="cell" style="left:1253px;top:435px;color:#c0c4cc">编辑</div>
<div class="cell" style="left:1295px;top:435px;color:#c9a063">删除</div>
<div style="left:1076px;top:465px;width:312px;height:42px;background:#fff;border-bottom:1px solid #e5c699"></div>
<div class="cell" style="left:1139px;top:477px;color:#c0c4cc">验证出库</div>
<div class="cell" style="left:1211px;top:477px;color:#c9a063">查看</div>
<div class="cell" style="left:1253px;top:477px;color:#c0c4cc">编辑</div>
<div class="cell" style="left:1295px;top:477px;color:#c9a063">删除</div>
<div style="left:1076px;top:507px;width:312px;height:42px;background:#fafafa;border-bottom:1px solid #e5c699"></div>
<div class="cell" style="left:1139px;top:519px;color:#c0c4cc">验证出库</div>
<div class="cell" style="left:1211px;top:519px;color:#c9a063">查看</div>
<div class="cell" style="left:1253px;top:519px;color:#c0c4cc">编辑</div>
<div class="cell" style="left:1295px;top:519px;color:#c9a063">删除</div>
<div style="left:1076px;top:549px;width:312px;height:42px;background:#fff;border-bottom:1px solid #e5c699"></div>
<div class="cell" style="left:1139px;top:561px;color:#c0c4cc">验证出库</div>
<div class="cell" style="left:1211px;top:561px;color:#c9a063">查看</div>
<div class="cell" style="left:1253px;top:561px;color:#c0c4cc">编辑</div>
<div class="cell" style="left:1295px;top:561px;color:#c9a063">删除</div>
<div style="left:1076px;top:591px;width:312px;height:42px;background:#fafafa;border-bottom:1px solid #e5c699"></div>
<div class="cell" style="left:1139px;top:603px;color:#c0c4cc">验证出库</div>
<div class="cell" style="left:1211px;top:603px;color:#c9a063">查看</div>
<div class="cell" style="left:1253px;top:603px;color:#c0c4cc">编辑</div>
<div class="cell" style="left:1295px;top:603px;color:#c9a063">删除</div>
<div class="vl" style="left:1076px;top:45px;height:565px"></div>
<div class="vl" style="left:1387px;top:45px;height:565px"></div>
<div style="left:1388px;top:44px;width:5px;height:566px;background:#f0f0f5"></div>
<div style="left:1388px;top:44px;width:5px;height:505px;background:#999"></div>
<div style="left:0;top:610px;width:1393px;height:8px;background:#f0f0f0"></div>
</div>
<div style="left:496px;top:880px;width:1393px;height:7px;background:#eee;border-radius:4px"></div>
<div style="left:531px;top:880px;width:1351px;height:7px;background:#999;border-radius:4px"></div>
<div style="left:821px;top:916px;font-size:15px;color:#c8a06a;line-height:18px">共 <span style="position:static;font-size:16px">4590</span> 条</div>
<div class="inp" style="left:911px;top:911px;width:100px;height:35px;border-radius:0"></div>
<div style="left:927px;top:920px;font-size:15px;color:#606266;line-height:18px">15条/页</div>
<svg style="position:absolute;left:993px;top:925px" width="10" height="6"><path d="M0.5 0.5 L5 5 L9.5 0.5" fill="none" stroke="#909399" stroke-width="1.2"/></svg>
<div class="pg" style="left:1031px;width:30px"></div>
<svg style="position:absolute;left:1042px;top:918px" width="9" height="12"><path d="M7 1 L2 6 L7 11" fill="none" stroke="#c0c4cc" stroke-width="1.4"/></svg>
<div class="pg" style="left:1071px;width:30px;background:#c9a063;color:#fff">1</div>
<div class="pg" style="left:1111px;width:30px">2</div>
<div class="pg" style="left:1151px;width:30px">3</div>
<div class="pg" style="left:1191px;width:30px">4</div>
<div class="pg" style="left:1231px;width:30px">5</div>
<div class="pg" style="left:1271px;width:30px">6</div>
<div class="pg" style="left:1311px;width:30px">···</div>
<div class="pg" style="left:1351px;width:35px">306</div>
<div class="pg" style="left:1396px;width:30px"></div>
<svg style="position:absolute;left:1407px;top:918px" width="9" height="12"><path d="M2 1 L7 6 L2 11" fill="none" stroke="#606266" stroke-width="1.4"/></svg>
<div style="left:1455px;top:919px;font-size:15px;color:#c8a06a;line-height:18px">前往</div>
<div class="inp" style="left:1489px;top:911px;width:60px;height:35px;border-radius:0"></div>
<div style="left:1489px;top:920px;width:60px;text-align:center;font-size:15px;color:#606266;line-height:18px">1</div>
<div style="left:1549px;top:919px;font-size:15px;color:#c8a06a;line-height:18px">页</div>
</body></html>
